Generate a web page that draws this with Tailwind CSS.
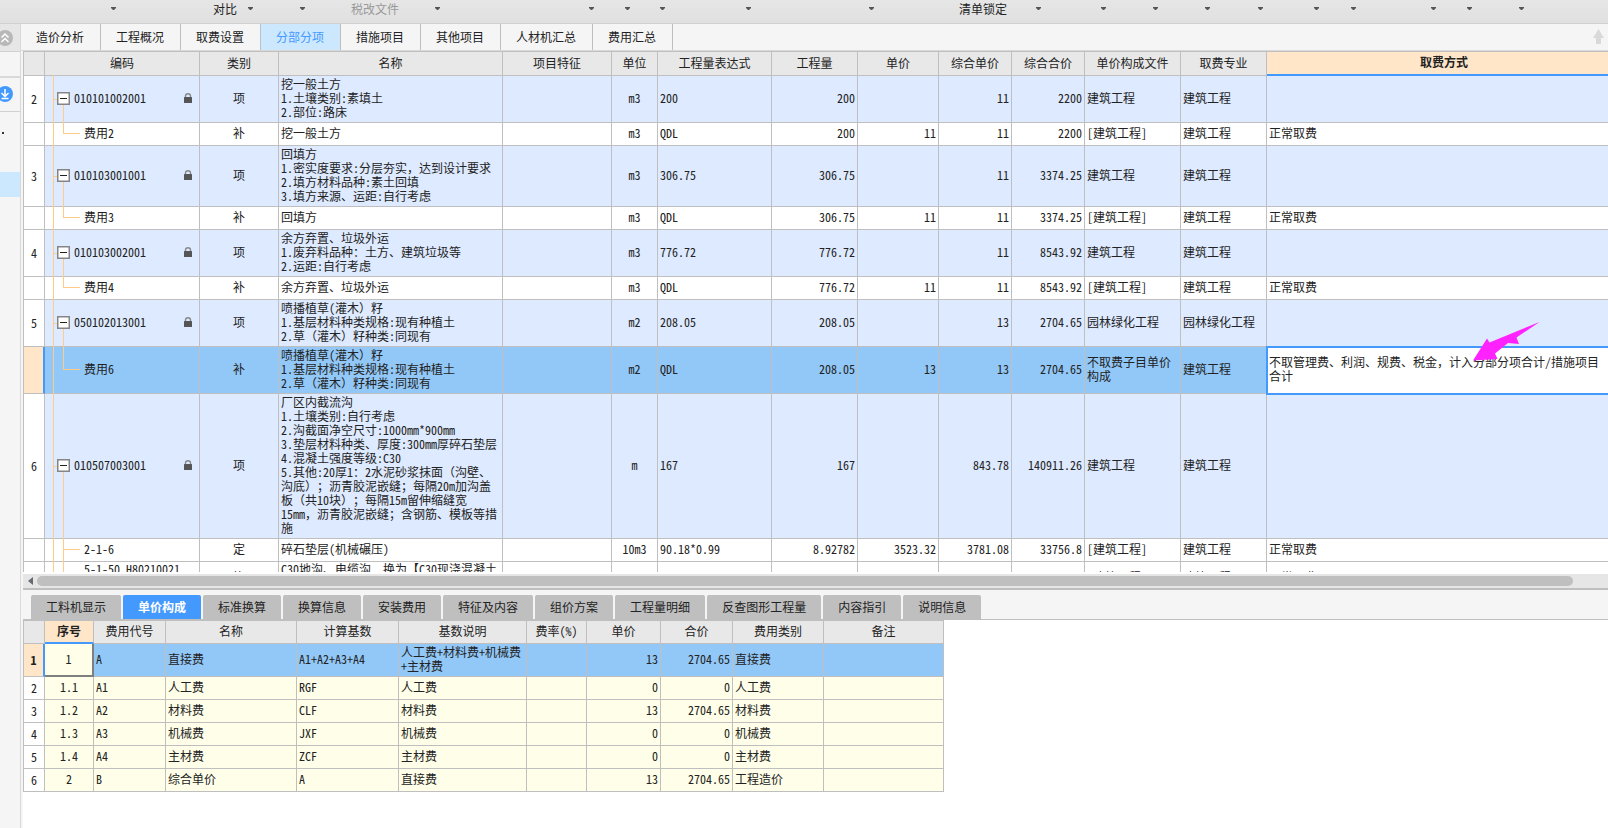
<!DOCTYPE html>
<html lang="zh-CN">
<head>
<meta charset="utf-8">
<title>分部分项</title>
<script src="https://cdn.jsdelivr.net/npm/@tailwindcss/browser@4"></script>
</head>
<body class="flex h-screen flex-col overflow-hidden bg-[#f5f5f5] font-['Noto_Sans_Mono_CJK_SC','Noto_Sans_CJK_SC',sans-serif] text-xs leading-[14px] text-[#222] [text-spacing-trim:space-all]">

<svg class="hidden">
  <symbol id="caret" viewBox="0 0 5 3"><path d="M0 0h5v1L3 3H2L0 1z" fill="#555"/></symbol>
  <symbol id="lock" viewBox="0 0 8 10"><path d="M1.500 5V3Q1.500.7 4 .7T6.500 3V5" fill="none" stroke="#8a8a8a" stroke-width="1.400"/><rect y="4" width="8" height="6" rx=".6" fill="#555"/></symbol>
  <symbol id="minus" viewBox="0 0 13 13"><rect x=".75" y=".75" width="11.5" height="11.5" fill="#fff" stroke="#858585" stroke-width="1.5"/><path d="M3 6.5h7" stroke="#222"/></symbol>
</svg>

<header class="flex h-6 shrink-0 items-start border-b border-[#d0d0d0] bg-linear-to-b from-[#e6e6e6] to-[#e0e0e0] [&_button]:flex [&_button]:h-4 [&_button]:shrink-0 [&_button]:items-center [&_button]:justify-end [&_button]:pt-0.5 [&_svg]:-mt-px [&_svg]:h-[3px] [&_svg]:w-[5px]">
  <button class="w-[116px]" aria-label="菜单"><svg><use href="#caret"/></svg></button>
  <button class="w-[137px] gap-[11px]">对比<svg><use href="#caret"/></svg></button>
  <button class="w-[52px]" aria-label="菜单"><svg><use href="#caret"/></svg></button>
  <button class="w-[135px] gap-9 text-[#999]">税改文件<svg><use href="#caret"/></svg></button>
  <button class="w-[154px]" aria-label="菜单"><svg><use href="#caret"/></svg></button>
  <button class="w-9" aria-label="菜单"><svg><use href="#caret"/></svg></button>
  <button class="w-[35px]" aria-label="菜单"><svg><use href="#caret"/></svg></button>
  <button class="w-[86px]" aria-label="菜单"><svg><use href="#caret"/></svg></button>
  <button class="w-[123px]" aria-label="菜单"><svg><use href="#caret"/></svg></button>
  <button class="w-[167px] gap-[29px]">清单锁定<svg><use href="#caret"/></svg></button>
  <button class="w-[65px]" aria-label="菜单"><svg><use href="#caret"/></svg></button>
  <button class="w-[52px]" aria-label="菜单"><svg><use href="#caret"/></svg></button>
  <button class="w-[52px]" aria-label="菜单"><svg><use href="#caret"/></svg></button>
  <button class="w-[53px]" aria-label="菜单"><svg><use href="#caret"/></svg></button>
  <button class="w-14" aria-label="菜单"><svg><use href="#caret"/></svg></button>
  <button class="w-[37px]" aria-label="菜单"><svg><use href="#caret"/></svg></button>
  <button class="w-20" aria-label="菜单"><svg><use href="#caret"/></svg></button>
  <button class="w-9" aria-label="菜单"><svg><use href="#caret"/></svg></button>
  <button class="w-[52px]" aria-label="菜单"><svg><use href="#caret"/></svg></button>
</header>

<div class="flex min-h-0 flex-1">
  <aside class="flex w-[21px] shrink-0 flex-col border-r border-[#d9d9d9]">
    <button class="h-7 border-b border-[#d0d0d0] bg-[#e6e6e6]" aria-label="收起">
      <svg class="h-[26px] w-5" viewBox="0 0 20 26"><circle cx="5" cy="13" r="8" fill="#b8b8b8"/><path d="M1.500 12.500 5 9l3.500 3.500M1.500 17 5 13.500 8.500 17" fill="none" stroke="#fff" stroke-width="1.500"/></svg>
    </button>
    <div class="h-[26px] border-b-2 border-[#d9d9d9]"></div>
    <button class="h-[34px] border-b border-[#d0d0d0]" aria-label="下载">
      <svg class="h-[33px] w-5" viewBox="0 0 20 33"><circle cx="5" cy="16" r="8" fill="#4499ff"/><path d="M5 11v7M1.500 15 5 18.500 8.500 15M1.500 20.500h7" fill="none" stroke="#fff" stroke-width="1.500"/></svg>
    </button>
    <div class="flex h-[60px] pt-5 pl-0.5"><i class="size-0.5 bg-[#333]"></i></div>
    <div class="h-[25px] bg-[#cce8ff]"></div>
  </aside>

  <div class="flex min-w-0 flex-1 flex-col">
    <nav class="flex h-[27px] shrink-0 border-b border-[#d9d9d9] [&_button]:w-20 [&_button]:border-r [&_button]:border-[#bfbfbf] [&_button]:pr-px">
      <button>造价分析</button>
      <button>工程概况</button>
      <button>取费设置</button>
      <button class="bg-[#cce8ff] text-[#4499ff]">分部分项</button>
      <button>措施项目</button>
      <button>其他项目</button>
      <button class="min-w-[92px]">人材机汇总</button>
      <button>费用汇总</button>
      <svg class="mt-[5px] mr-1 ml-auto h-[15px] w-[11px]" viewBox="0 0 11 15"><path d="M5.500 0 11 9H8v6H3V9H0z" fill="#d9d9d9"/></svg>
    </nav>

    <main class="relative ml-0.5 min-h-0 flex-1 overflow-hidden border-t border-l border-[#bfbfbf] bg-white">
      <table class="w-[calc(100%+14px)] table-fixed border-separate border-spacing-0 [&_td]:border-r [&_td]:border-b [&_td]:border-[#bfbfbf] [&_td]:px-0.5 [&_td]:pt-0 [&_td]:pb-0.5 [&_td:first-child]:bg-white [&_td:first-child]:pb-0 [&_td:first-child]:text-center [&_td:nth-child(2)]:relative [&_td:nth-child(3)]:text-center [&_td:nth-child(6)]:text-center [&_td:nth-child(8)]:text-right [&_td:nth-child(9)]:text-right [&_td:nth-child(10)]:text-right [&_td:nth-child(11)]:text-right [&_th]:border-r [&_th]:border-b [&_th]:border-[#bfbfbf] [&_th]:bg-[#e8e8e8] [&_th]:px-0 [&_th]:pt-0 [&_th]:pb-0.5 [&_th]:font-normal">
        <colgroup>
          <col class="w-[21px]"><col class="w-[155px]"><col class="w-[79px]"><col class="w-56"><col class="w-[109px]"><col class="w-[46px]"><col class="w-[114px]"><col class="w-[86px]"><col class="w-[81px]"><col class="w-[73px]"><col class="w-[73px]"><col class="w-24"><col class="w-[86px]"><col>
        </colgroup>
        <thead>
          <tr class="h-6"><th></th><th>编码</th><th>类别</th><th>名称</th><th>项目特征</th><th>单位</th><th>工程量表达式</th><th>工程量</th><th>单价</th><th>综合单价</th><th>综合合价</th><th>单价构成文件</th><th>取费专业</th><th class="border-b-2! border-[#4499ff]! bg-[#ffe6c8]! font-bold!">取费方式</th></tr>
        </thead>
        <tbody class="[&_.trunk]:absolute [&_.trunk]:-top-px [&_.trunk]:bottom-0 [&_.trunk]:left-2 [&_.trunk]:w-px [&_.trunk]:bg-[#ffcc88] [&_.stub]:absolute [&_.stub]:top-1/2 [&_.stub]:left-2 [&_.stub]:h-px [&_.stub]:w-1 [&_.stub]:bg-[#ffcc88] [&_.down]:absolute [&_.down]:top-1/2 [&_.down]:-bottom-px [&_.down]:left-[18px] [&_.down]:w-px [&_.down]:bg-[#ffcc88] [&_.elbow]:absolute [&_.elbow]:top-0 [&_.elbow]:bottom-1/2 [&_.elbow]:left-[18px] [&_.elbow]:w-[17px] [&_.elbow]:border-b [&_.elbow]:border-l [&_.elbow]:border-[#ffcc88] [&_.node]:relative [&_.node]:flex [&_.node]:items-center [&_.node]:gap-1 [&_.node]:pr-[5px] [&_.node]:pl-2.5 [&_.leaf]:pl-[37px] [&_button]:size-[13px] [&_button_svg]:size-[13px] [&_.lock]:ml-auto [&_.lock]:h-2.5 [&_.lock]:w-2">
          <tr class="h-[47px] bg-[#deeaff]"><td>2</td>
            <td><i class="trunk"></i><i class="stub"></i><i class="down"></i><div class="node"><button aria-label="折叠"><svg><use href="#minus"/></svg></button>010101002001<svg class="lock"><use href="#lock"/></svg></div></td>
            <td>项</td><td>挖一般土方<br>1.土壤类别:素填土<br>2.部位:路床</td><td></td><td>m3</td><td>200</td><td>200</td><td></td><td>11</td><td>2200</td><td>建筑工程</td><td>建筑工程</td><td></td></tr>
          <tr class="h-[23px]"><td></td>
            <td><i class="trunk"></i><i class="elbow"></i><div class="leaf">费用2</div></td>
            <td>补</td><td>挖一般土方</td><td></td><td>m3</td><td>QDL</td><td>200</td><td>11</td><td>11</td><td>2200</td><td>[建筑工程]</td><td>建筑工程</td><td>正常取费</td></tr>
          <tr class="h-[61px] bg-[#deeaff]"><td>3</td>
            <td><i class="trunk"></i><i class="stub"></i><i class="down"></i><div class="node"><button aria-label="折叠"><svg><use href="#minus"/></svg></button>010103001001<svg class="lock"><use href="#lock"/></svg></div></td>
            <td>项</td><td>回填方<br>1.密实度要求:分层夯实，达到设计要求<br>2.填方材料品种:素土回填<br>3.填方来源、运距:自行考虑</td><td></td><td>m3</td><td>306.75</td><td>306.75</td><td></td><td>11</td><td>3374.25</td><td>建筑工程</td><td>建筑工程</td><td></td></tr>
          <tr class="h-[23px]"><td></td>
            <td><i class="trunk"></i><i class="elbow"></i><div class="leaf">费用3</div></td>
            <td>补</td><td>回填方</td><td></td><td>m3</td><td>QDL</td><td>306.75</td><td>11</td><td>11</td><td>3374.25</td><td>[建筑工程]</td><td>建筑工程</td><td>正常取费</td></tr>
          <tr class="h-[47px] bg-[#deeaff]"><td>4</td>
            <td><i class="trunk"></i><i class="stub"></i><i class="down"></i><div class="node"><button aria-label="折叠"><svg><use href="#minus"/></svg></button>010103002001<svg class="lock"><use href="#lock"/></svg></div></td>
            <td>项</td><td>余方弃置、垃圾外运<br>1.废弃料品种：土方、建筑垃圾等<br>2.运距:自行考虑</td><td></td><td>m3</td><td>776.72</td><td>776.72</td><td></td><td>11</td><td>8543.92</td><td>建筑工程</td><td>建筑工程</td><td></td></tr>
          <tr class="h-[23px]"><td></td>
            <td><i class="trunk"></i><i class="elbow"></i><div class="leaf">费用4</div></td>
            <td>补</td><td>余方弃置、垃圾外运</td><td></td><td>m3</td><td>QDL</td><td>776.72</td><td>11</td><td>11</td><td>8543.92</td><td>[建筑工程]</td><td>建筑工程</td><td>正常取费</td></tr>
          <tr class="h-[47px] bg-[#deeaff]"><td>5</td>
            <td><i class="trunk"></i><i class="stub"></i><i class="down"></i><div class="node"><button aria-label="折叠"><svg><use href="#minus"/></svg></button>050102013001<svg class="lock"><use href="#lock"/></svg></div></td>
            <td>项</td><td>喷播植草(灌木）籽<br>1.基层材料种类规格:现有种植土<br>2.草（灌木）籽种类:同现有</td><td></td><td>m2</td><td>208.05</td><td>208.05</td><td></td><td>13</td><td>2704.65</td><td>园林绿化工程</td><td>园林绿化工程</td><td></td></tr>
          <tr class="h-[47px] bg-[#92c8f8]"><td class="border-r-2! border-r-[#4499ff]! bg-[#ffe6c8]!"></td>
            <td><i class="trunk"></i><i class="elbow"></i><div class="leaf">费用6</div></td>
            <td>补</td><td>喷播植草(灌木）籽<br>1.基层材料种类规格:现有种植土<br>2.草（灌木）籽种类:同现有</td><td></td><td>m2</td><td>QDL</td><td>208.05</td><td>13</td><td>13</td><td>2704.65</td><td>不取费子目单价构成</td><td>建筑工程</td>
            <td class="relative bg-white pr-4! outline-2 -outline-offset-1 outline-[#4499ff]">不取管理费、利润、规费、税金，计入分部分项合计/措施项目合计
              <svg class="absolute -top-[25px] left-[206px] h-[39px] w-[67px]" viewBox="1473 322 67 39"><path d="M1473 360.500 1487 338.500 1489.500 342.500 1539.500 322 1516.500 337.500 1519 344 1508 343 1495 353.500 1497.500 359z" fill="#ff22ff"/></svg></td></tr>
          <tr class="h-[145px] bg-[#deeaff]"><td>6</td>
            <td><i class="trunk"></i><i class="stub"></i><i class="down"></i><div class="node"><button aria-label="折叠"><svg><use href="#minus"/></svg></button>010507003001<svg class="lock"><use href="#lock"/></svg></div></td>
            <td>项</td><td>厂区内截流沟<br>1.土壤类别:自行考虑<br>2.沟截面净空尺寸:1000mm*900mm<br>3.垫层材料种类、厚度:300mm厚碎石垫层<br>4.混凝土强度等级:C30<br>5.其他:20厚1：2水泥砂浆抹面（沟壁、<br>沟底）；沥青胶泥嵌缝；每隔20m加沟盖<br>板（共10块）；每隔15m留伸缩缝宽<br>15mm，沥青胶泥嵌缝；含钢筋、模板等措<br>施</td><td></td><td>m</td><td>167</td><td>167</td><td></td><td>843.78</td><td>140911.26</td><td>建筑工程</td><td>建筑工程</td><td></td></tr>
          <tr class="h-[23px]"><td></td>
            <td><i class="trunk"></i><i class="elbow"></i><i class="down"></i><div class="leaf">2-1-6</div></td>
            <td>定</td><td>碎石垫层(机械碾压)</td><td></td><td>10m3</td><td>90.18*0.99</td><td>8.92782</td><td>3523.32</td><td>3781.08</td><td>33756.8</td><td>[建筑工程]</td><td>建筑工程</td><td>正常取费</td></tr>
          <tr class="h-[33px]"><td></td>
            <td class="align-top"><i class="trunk"></i><i class="elbow"></i><div class="leaf">5-1-50 H80210021</div></td>
            <td>换</td><td class="align-top">C30地沟、电缆沟　换为【C30现浇混凝土</td><td></td><td></td><td></td><td></td><td></td><td></td><td></td><td>[建筑工程]</td><td>建筑工程</td><td>正常取费</td></tr>
        </tbody>
      </table>
    </main>

    <div class="mt-0.5 ml-0.5 flex h-4 shrink-0 items-center border-b-2 border-[#bfbfbf] bg-[#e6e6e6] pl-[5px] shadow-[0_-2px_0_#fff]">
      <svg class="h-2 w-[5px]" viewBox="0 0 5 8"><path d="M5 0v8L0 4z" fill="#666a73"/></svg>
      <div class="mr-[35px] ml-1 h-2.5 flex-1 rounded-full bg-[#bfbfbf]"></div>
    </div>

    <section class="shrink-0 pt-[5px]">
      <nav class="flex h-6 gap-0.5 pl-2.5 [&_button]:rounded-t-xs [&_button]:bg-[#bfbfbf] [&_button]:px-[15px] [&_button]:pb-px">
        <button>工料机显示</button>
        <button class="bg-[#4499ff]! font-bold text-white">单价构成</button>
        <button>标准换算</button>
        <button>换算信息</button>
        <button>安装费用</button>
        <button>特征及内容</button>
        <button>组价方案</button>
        <button>工程量明细</button>
        <button>反查图形工程量</button>
        <button>内容指引</button>
        <button>说明信息</button>
      </nav>
      <div class="ml-0.5 border-t border-[#bfbfbf] bg-white pb-9">
        <table class="w-[921px] table-fixed border-separate border-spacing-0 border-t border-l border-[#bfbfbf] [&_td]:border-r [&_td]:border-b [&_td]:border-[#bfbfbf] [&_td]:px-0.5 [&_td]:pt-0 [&_td]:pb-0.5 [&_td:first-child]:bg-white [&_td:first-child]:pb-0 [&_td:first-child]:text-center [&_td:nth-child(2)]:text-center [&_td:nth-child(8)]:text-right [&_td:nth-child(9)]:text-right [&_th]:border-r [&_th]:border-b [&_th]:border-[#bfbfbf] [&_th]:bg-[#e8e8e8] [&_th]:px-0 [&_th]:pt-0 [&_th]:pb-0.5 [&_th]:font-normal">
          <colgroup>
            <col class="w-[21px]"><col class="w-[49px]"><col class="w-[72px]"><col class="w-[131px]"><col class="w-[102px]"><col class="w-32"><col class="w-[60px]"><col class="w-[74px]"><col class="w-[72px]"><col class="w-[91px]"><col>
          </colgroup>
          <thead>
            <tr class="h-[23px]"><th></th><th class="border-b-2! border-b-[#4499ff]! bg-[#ffe6c8]! font-bold!">序号</th><th>费用代号</th><th>名称</th><th>计算基数</th><th>基数说明</th><th>费率(%)</th><th>单价</th><th>合价</th><th>费用类别</th><th>备注</th></tr>
          </thead>
          <tbody class="bg-[#ffffe9]">
            <tr class="h-[33px] bg-[#92c8f8]"><td class="border-r-2! border-r-[#4499ff]! bg-[#ffe6c8]! font-bold">1</td><td class="border-r-2! border-b-2! border-[#7f7f7f]! bg-[#ffffe9]">1</td><td>A</td><td>直接费</td><td>A1+A2+A3+A4</td><td>人工费+材料费+机械费+主材费</td><td></td><td>13</td><td>2704.65</td><td>直接费</td><td></td></tr>
            <tr class="h-[23px]"><td>2</td><td>1.1</td><td>A1</td><td>人工费</td><td>RGF</td><td>人工费</td><td></td><td>0</td><td>0</td><td>人工费</td><td></td></tr>
            <tr class="h-[23px]"><td>3</td><td>1.2</td><td>A2</td><td>材料费</td><td>CLF</td><td>材料费</td><td></td><td>13</td><td>2704.65</td><td>材料费</td><td></td></tr>
            <tr class="h-[23px]"><td>4</td><td>1.3</td><td>A3</td><td>机械费</td><td>JXF</td><td>机械费</td><td></td><td>0</td><td>0</td><td>机械费</td><td></td></tr>
            <tr class="h-[23px]"><td>5</td><td>1.4</td><td>A4</td><td>主材费</td><td>ZCF</td><td>主材费</td><td></td><td>0</td><td>0</td><td>主材费</td><td></td></tr>
            <tr class="h-[23px]"><td>6</td><td>2</td><td>B</td><td>综合单价</td><td>A</td><td>直接费</td><td></td><td>13</td><td>2704.65</td><td>工程造价</td><td></td></tr>
          </tbody>
        </table>
      </div>
    </section>
  </div>
</div>
</body>
</html>
